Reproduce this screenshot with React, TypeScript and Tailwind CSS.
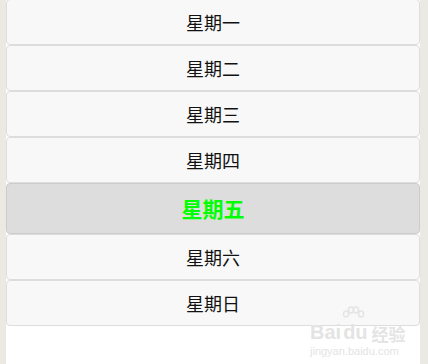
import React from "react";

const days = ["星期一", "星期二", "星期三", "星期四", "星期五", "星期六", "星期日"];
const selected = 4;

export default function App() {
  return (
    <div
      className="w-[428px] h-[364px] bg-[#ebe9e4] pl-[6px] pr-[8px] overflow-hidden"
      style={{ fontFamily: '"Noto Sans CJK SC", "Noto Sans", sans-serif' }}
    >
      <div className="relative h-full bg-white overflow-hidden">
        <div className="flex flex-col -mt-[1px]">
          {days.map((d, i) =>
            i === selected ? (
              <div
                key={d}
                className="h-[51px] shrink-0 flex items-center justify-center rounded-[4px] border border-[#cccccc] bg-[#dddddd] text-[21px] font-bold text-[#00ff00]"
              >
                {d}
              </div>
            ) : (
              <div
                key={d}
                className="h-[46px] shrink-0 flex items-center justify-center rounded-[4px] border border-[#dddddd] bg-[#f8f8f8] text-[18px] text-[#111111]"
              >
                {d}
              </div>
            )
          )}
        </div>
        <div className="absolute left-[304px] top-[306px] flex flex-col items-start text-[#e4e4e4] leading-none pointer-events-none">
          <svg width="26" height="20" viewBox="0 0 26 20" className="ml-[30px] mb-[-4px]" fill="none" stroke="#e4e4e4" strokeWidth="1.5">
            <ellipse cx="6" cy="8" rx="2.5" ry="3" />
            <ellipse cx="11" cy="4" rx="2.5" ry="3" />
            <ellipse cx="16" cy="4" rx="2.5" ry="3" />
            <ellipse cx="21" cy="8" rx="2.5" ry="3" />
          </svg>
          <div className="flex items-end gap-[2px]">
            <span className="text-[20px] font-bold" style={{ fontFamily: '"Liberation Sans", sans-serif' }}>
              Bai
            </span>
            <span className="text-[20px] font-bold" style={{ fontFamily: '"Liberation Sans", sans-serif' }}>
              du
            </span>
            <span className="text-[17px] font-bold ml-[2px]">经验</span>
          </div>
          <span className="text-[11px] mt-[4px]" style={{ fontFamily: '"Liberation Sans", sans-serif' }}>
            jingyan.baidu.com
          </span>
        </div>
      </div>
    </div>
  );
}
